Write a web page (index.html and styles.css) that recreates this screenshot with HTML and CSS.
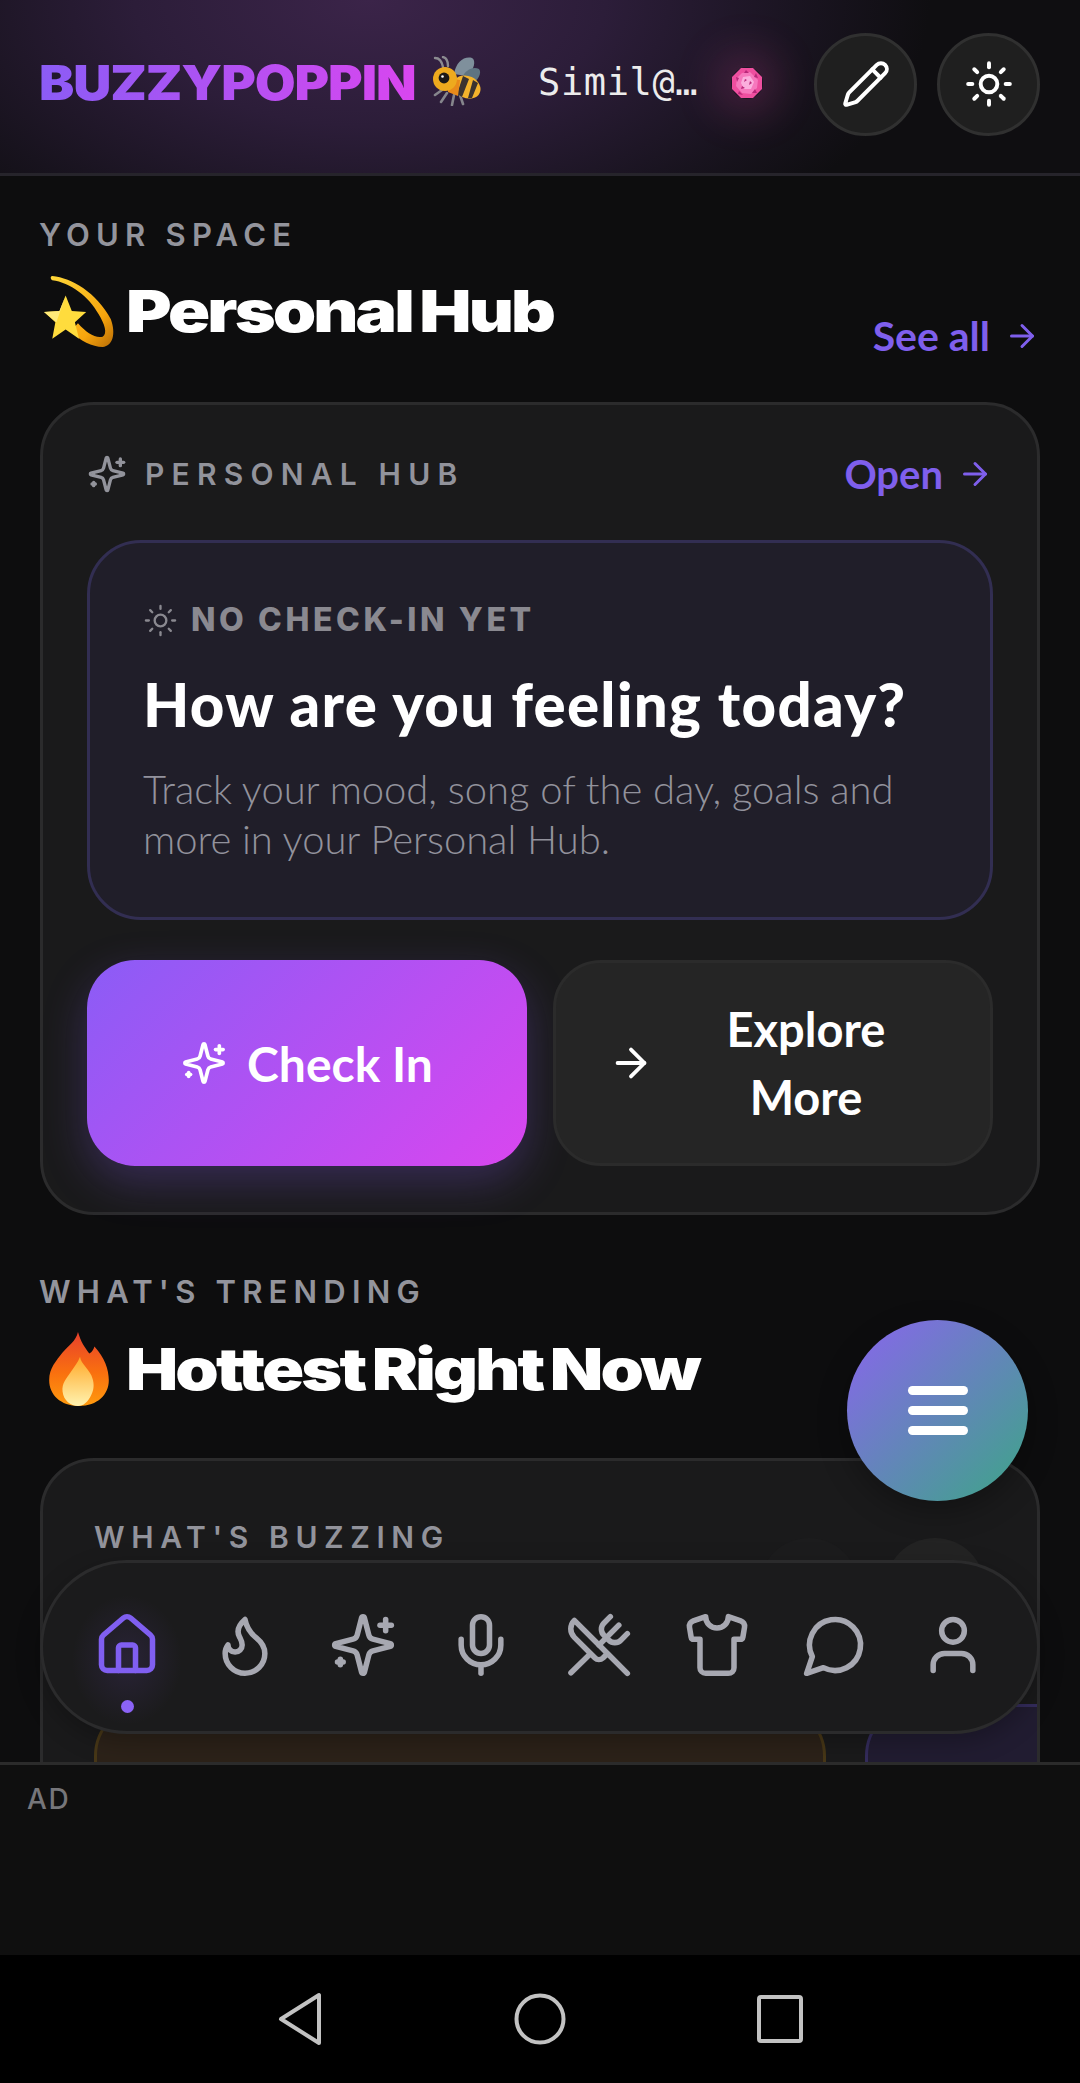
FILE: index.html
```html
<!DOCTYPE html>
<html lang="en">
<head>
<meta charset="utf-8">
<title>BuzzyPoppin</title>
<link rel="stylesheet" href="styles.css">
</head>
<body>
<svg class="defs" width="0" height="0" aria-hidden="true">
  <symbol id="i-home" viewBox="0 0 24 24"><path d="M15 21v-8a1 1 0 0 0-1-1h-4a1 1 0 0 0-1 1v8"/><path d="M3 10a2 2 0 0 1 .709-1.528l7-5.999a2 2 0 0 1 2.582 0l7 5.999A2 2 0 0 1 21 10v9a2 2 0 0 1-2 2H5a2 2 0 0 1-2-2z"/></symbol>
  <symbol id="i-flame" viewBox="0 0 24 24"><path d="M8.5 14.5A2.5 2.5 0 0 0 11 12c0-1.38-.5-2-1-3-1.072-2.143-.224-4.054 2-6 .5 2.5 2 4.9 4 6.5 2 1.6 3 3.5 3 5.5a7 7 0 1 1-14 0c0-1.153.433-2.294 1-3a2.5 2.5 0 0 0 2.5 2.5z"/></symbol>
  <symbol id="i-sparkles" viewBox="0 0 24 24"><path d="M9.937 15.5A2 2 0 0 0 8.5 14.063l-6.135-1.582a.5.5 0 0 1 0-.962L8.5 9.936A2 2 0 0 0 9.937 8.5l1.582-6.135a.5.5 0 0 1 .963 0L14.063 8.5A2 2 0 0 0 15.5 9.937l6.135 1.581a.5.5 0 0 1 0 .964L15.5 14.063a2 2 0 0 0-1.437 1.437l-1.582 6.135a.5.5 0 0 1-.963 0z"/><path d="M20 3v4"/><path d="M22 5h-4"/><path d="M4 17v2"/><path d="M5 18H3"/></symbol>
  <symbol id="i-mic" viewBox="0 0 24 24"><path d="M12 2a3 3 0 0 0-3 3v7a3 3 0 0 0 6 0V5a3 3 0 0 0-3-3Z"/><path d="M19 10v2a7 7 0 0 1-14 0v-2"/><line x1="12" x2="12" y1="19" y2="22"/></symbol>
  <symbol id="i-utensils" viewBox="0 0 24 24"><path d="m16 2-2.3 2.3a3 3 0 0 0 0 4.2l1.8 1.8a3 3 0 0 0 4.2 0L22 8"/><path d="M15 15 3.3 3.3a4.2 4.2 0 0 0 0 6l7.3 7.3c.7.7 2 .7 2.8 0L15 15Zm0 0 7 7"/><path d="m2.1 21.8 6.4-6.3"/><path d="m19 5-7 7"/></symbol>
  <symbol id="i-shirt" viewBox="0 0 24 24"><path d="M20.38 3.46 16 2a4 4 0 0 1-8 0L3.62 3.46a2 2 0 0 0-1.34 2.23l.58 3.47a1 1 0 0 0 .99.84H6v10c0 1.1.9 2 2 2h8a2 2 0 0 0 2-2V10h2.15a1 1 0 0 0 .99-.84l.58-3.47a2 2 0 0 0-1.34-2.23z"/></symbol>
  <symbol id="i-chat" viewBox="0 0 24 24"><path d="M7.9 20A9 9 0 1 0 4 16.1L2 22Z"/></symbol>
  <symbol id="i-user" viewBox="0 0 24 24"><path d="M19 21v-2a4 4 0 0 0-4-4H9a4 4 0 0 0-4 4v2"/><circle cx="12" cy="7" r="4"/></symbol>
  <symbol id="i-pencil" viewBox="0 0 24 24"><path d="M21.174 6.812a1 1 0 0 0-3.986-3.987L3.842 16.174a2 2 0 0 0-.5.83l-1.321 4.352a.5.5 0 0 0 .623.622l4.353-1.32a2 2 0 0 0 .83-.497z"/><path d="m15 5 4 4"/></symbol>
  <symbol id="i-sun" viewBox="0 0 24 24"><circle cx="12" cy="12" r="4"/><path d="M12 2v2"/><path d="M12 20v2"/><path d="m4.93 4.93 1.41 1.41"/><path d="m17.66 17.66 1.41 1.41"/><path d="M2 12h2"/><path d="M20 12h2"/><path d="m6.34 17.66-1.41 1.41"/><path d="m19.07 4.93-1.41 1.41"/></symbol>
  <symbol id="i-arrow" viewBox="0 0 24 24"><path d="M5 12h14"/><path d="m12 5 7 7-7 7"/></symbol>
</svg>

<div class="screen">
  <div class="viewport">
    <header class="topbar">
      <div class="brand">
        <span class="brand-name">BUZZYPOPPIN</span>
        <svg class="bee" viewBox="0 0 50 50" aria-hidden="true">
          <path d="M22 18C24 6 32 0 40 2c4 2 3 12-6 18z" fill="#7f909c"/>
          <path d="M30 22c3-8 11-12 17-9 3 3 0 13-11 16z" fill="#5f7482"/>
          <path d="M3 2c5 0 7 4 8 9M11 1c4 1 5 5 5 9" stroke="#8b8b90" stroke-width="2.4" fill="none" stroke-linecap="round"/>
          <path d="M10 34l-7 5M15 37l-6 9M22 39l-2 10M28 39l3 9" stroke="#85858c" stroke-width="2.6" stroke-linecap="round"/>
          <ellipse cx="35" cy="31" rx="14" ry="11" transform="rotate(25 35 31)" fill="#f3b32c"/>
          <path d="M31 20l-6 18 5 3 7-18zM41 24l-5 18 4 0 6-15z" fill="#3b3330"/>
          <path d="M16 22l12 2-2 16-10-4z" fill="#e98a1a"/>
          <circle cx="13" cy="23" r="12" fill="#eeaa1e"/>
          <circle cx="12" cy="22" r="5.4" fill="#1c1a18"/>
          <circle cx="10.5" cy="20.5" r="1.3" fill="#fff"/>
        </svg>
      </div>
      <div class="user-chip">
        <span class="user-name">Simil@…</span>
        <span class="gem-wrap">
          <svg class="gem" viewBox="0 0 32 32" aria-hidden="true">
            <path d="M10 1h12l9 9v12l-9 9H10l-9-9V10z" fill="#ee4f9f"/>
            <path d="M11 6l8-1 8 8-1 8-6 6-9-1-6-7 1-8z" fill="#f678bd"/>
            <path d="M12 10l7-1 4 6-3 7-7 0-3-6z" fill="#fbaedd"/>
            <path d="M5 10l3 1-2 4zM25 6l2 5-4-1zM24 22l2 4-5 0zM8 24l4 4-5-1zM15 3l3 3-5 0zM19 14l2 2-3 2zM11 19l3 2-4 1zM14 12l2 1-3 2z" fill="#b9287a"/>
          </svg>
        </span>
      </div>
      <button class="round-btn"><svg class="icon icon-btn"><use href="#i-pencil"/></svg></button>
      <button class="round-btn"><svg class="icon icon-btn"><use href="#i-sun"/></svg></button>
    </header>

    <main class="feed">
      <section class="section section-hub">
        <p class="eyebrow">YOUR SPACE</p>
        <div class="section-head">
          <h2 class="section-title">
            <svg class="title-emoji" viewBox="0 0 70 72" aria-hidden="true">
              <defs>
                <linearGradient id="ring" x1="0" y1="0" x2="1" y2="1"><stop offset="0" stop-color="#ffd83a"/><stop offset=".7" stop-color="#f7a50d"/><stop offset="1" stop-color="#b86c06"/></linearGradient>
              </defs>
              <path d="M9 2C28 4 52 18 66 44c5 14 2 26-8 27-10 0-22-6-31-15l7-8c8 9 17 15 24 13 5-3 2-12-4-22C45 22 26 8 9 6 7 5 7 2 9 2z" fill="url(#ring)"/>
              <path d="M22 21l6 15 14 1-11 10 4 16-13-9-13 9 3-16L1 37l15-1z" fill="#ffdc3d"/>
              <path d="M22 21l-6 15-15 1 12 10z" fill="#ffea7a"/>
            </svg>
            <span class="title-text">Personal Hub</span>
          </h2>
          <a class="link link-see">See all <svg class="icon icon-link"><use href="#i-arrow"/></svg></a>
        </div>

        <article class="card hub-card">
          <div class="card-head">
            <span class="card-label"><svg class="icon icon-label"><use href="#i-sparkles"/></svg>PERSONAL HUB</span>
            <a class="link">Open <svg class="icon icon-link"><use href="#i-arrow"/></svg></a>
          </div>
          <div class="checkin">
            <p class="checkin-status"><svg class="icon icon-status"><use href="#i-sun"/></svg>NO CHECK-IN YET</p>
            <h3 class="checkin-title">How are you feeling today?</h3>
            <p class="checkin-desc">Track your mood, song of the day, goals and more in your Personal Hub.</p>
          </div>
          <div class="actions">
            <button class="btn btn-primary"><svg class="icon icon-btn-s"><use href="#i-sparkles"/></svg><span>Check In</span></button>
            <button class="btn btn-dark"><svg class="icon icon-btn-a"><use href="#i-arrow"/></svg><span class="btn-text">Explore More</span></button>
          </div>
        </article>
      </section>

      <section class="section section-hot">
        <p class="eyebrow">WHAT'S TRENDING</p>
        <h2 class="section-title">
          <svg class="title-emoji" viewBox="0 0 66 72" aria-hidden="true">
            <defs>
              <linearGradient id="fl" x1="0" y1="0" x2="0" y2="1"><stop offset="0" stop-color="#e8402c"/><stop offset=".55" stop-color="#f9700f"/><stop offset="1" stop-color="#ff9a0e"/></linearGradient>
              <linearGradient id="fl2" x1="0" y1="0" x2="0" y2="1"><stop offset="0" stop-color="#ffa726"/><stop offset="1" stop-color="#fff3b0"/></linearGradient>
            </defs>
            <path d="M32 0c3 10 6 14 11 21 3-2 4-4 5-7 10 11 14 22 14 33 0 14-11 25-29 25S4 61 4 47c0-12 7-19 13-27 6-7 13-11 15-20z" fill="url(#fl)"/>
            <path d="M34 24c1 7 7 10 11 18 3 7 3 13 0 19-3 7-8 11-13 11-7 0-14-5-15-14-1-8 4-13 8-19 3-5 7-9 9-15z" fill="url(#fl2)"/>
          </svg>
          <span class="title-text">Hottest Right Now</span>
        </h2>

        <article class="card buzz-card">
          <div class="buzz-head">
            <span class="card-label card-label-wide">WHAT'S BUZZING</span>
            <div class="buzz-ctrls"><span class="ctrl ctrl-faint"></span><span class="ctrl"></span></div>
          </div>
          <div class="buzz-row">
            <div class="tile tile-amber"></div>
            <div class="tile tile-violet"></div>
          </div>
        </article>
      </section>
    </main>

    <button class="fab" aria-label="Menu"><span></span><span></span><span></span></button>

    <nav class="dock">
      <a class="dock-item is-active"><svg class="icon icon-dock"><use href="#i-home"/></svg><i class="dock-dot"></i></a>
      <a class="dock-item"><svg class="icon icon-dock"><use href="#i-flame"/></svg></a>
      <a class="dock-item"><svg class="icon icon-dock"><use href="#i-sparkles"/></svg></a>
      <a class="dock-item"><svg class="icon icon-dock"><use href="#i-mic"/></svg></a>
      <a class="dock-item"><svg class="icon icon-dock"><use href="#i-utensils"/></svg></a>
      <a class="dock-item"><svg class="icon icon-dock"><use href="#i-shirt"/></svg></a>
      <a class="dock-item"><svg class="icon icon-dock"><use href="#i-chat"/></svg></a>
      <a class="dock-item"><svg class="icon icon-dock"><use href="#i-user"/></svg></a>
    </nav>
  </div>

  <aside class="ad"><span class="ad-label">AD</span></aside>

  <div class="sysnav">
    <svg class="sys-icon" viewBox="0 0 46 54" aria-hidden="true"><path d="M42 3v48L4 27z"/></svg>
    <svg class="sys-icon" viewBox="0 0 54 54" aria-hidden="true"><circle cx="27" cy="27" r="23.5"/></svg>
    <svg class="sys-icon" viewBox="0 0 46 54" aria-hidden="true"><rect x="2" y="5" width="42" height="44" rx="2"/></svg>
  </div>
</div>
</body>
</html>
```

FILE: styles.css
```css
* { box-sizing: border-box; }
html, body { margin: 0; padding: 0; background: #000; }
body { font-family: "Lato", "Inter", sans-serif; color: #fff; }
p, h2, h3 { margin: 0; }
.defs { position: absolute; }

.screen { width: 1080px; height: 2083px; display: flex; flex-direction: column; overflow: hidden; }
.viewport { position: relative; flex: 1 1 auto; min-height: 0; overflow: hidden; background: #0d0d0e; }

.icon { fill: none; stroke: currentColor; stroke-width: 2; stroke-linecap: round; stroke-linejoin: round; flex: none; }

/* Top bar */
.topbar {
  height: 176px; display: flex; align-items: center; padding: 0 40px 8px;
  border-bottom: 3px solid #26242b;
  background: radial-gradient(ellipse 560px 300px at 370px 0, #3b2449 0%, #2c1d39 42%, #18131e 80%, #0f0e11 100%);
}
.brand { display: flex; align-items: center; }
.brand-name {
  font-family: "Inter", sans-serif; font-weight: 900; font-size: 48px; line-height: 1;
  letter-spacing: -1px; display: inline-block; width: 344px; transform: scaleX(1.1); transform-origin: left center;
  white-space: nowrap; color: transparent; margin-left: -1px;
  background: linear-gradient(90deg, #8b5cf6, #d946ef); -webkit-background-clip: text; background-clip: text;
}
.bee { width: 50px; height: 50px; margin-left: 49px; margin-top: -4px; }
.user-chip { display: flex; align-items: center; margin-left: 56px; flex: 1; }
.user-name { font-family: "DejaVu Sans Mono", monospace; font-size: 37px; color: #ececec; letter-spacing: .6px; line-height: 1; }
.gem-wrap { display: flex; margin-left: 33px; border-radius: 50%; box-shadow: 0 0 44px 14px rgba(226, 74, 160, .24); }
.gem { width: 32px; height: 32px; display: block; }
.round-btn {
  width: 103px; height: 103px; border-radius: 50%; background: #1f1f1f; border: 3px solid #303030;
  display: flex; align-items: center; justify-content: center; color: #fff; padding: 0; margin: 3px 0 0 20px;
}
.icon-btn { width: 50px; height: 50px; stroke-width: 1.9; }

/* Feed */
.feed { padding: 0 40px; }
.section-hub { padding-top: 41px; }
.section-hot { padding-top: 59px; }
.eyebrow {
  font-family: "Inter", sans-serif; font-weight: 600; font-size: 31px; line-height: 36px;
  letter-spacing: 6.2px; color: #93949c; margin-left: -1px;
}
.section-head { display: flex; justify-content: space-between; align-items: flex-end; }
.section-title {
  display: flex; align-items: center; gap: 10px;
  font-family: "Inter", sans-serif; font-weight: 900; font-size: 58px; line-height: 80px;
  letter-spacing: -2.4px; word-spacing: -3px; color: #fff; margin-top: 19px;
}
.section-hub .section-title { margin-top: 18px; }
.title-text { display: inline-block; transform: scaleX(1.2); transform-origin: left center; white-space: nowrap; }
.title-emoji { width: 74px; height: 74px; flex: none; margin-left: 2px; }
.link { display: inline-flex; align-items: center; gap: 14px; font-weight: 700; font-size: 40px; line-height: 48px; color: #7f5fec; }
.link-see { margin-bottom: -9px; font-size: 41px; }
.icon-link { width: 36px; height: 36px; }

/* Cards */
.card { background: #1a1a1b; border: 3px solid #2b2b2c; border-radius: 54px; }
.hub-card { margin-top: 51px; height: 813px; padding: 0 44px; }
.card-head { height: 134px; padding-top: 4px; display: flex; justify-content: space-between; align-items: center; }
.card-label { display: flex; align-items: center; gap: 18px; font-family: "Inter", sans-serif; font-weight: 600; font-size: 30px; letter-spacing: 7.2px; color: #92939b; }
.icon-label { width: 40px; height: 40px; }

.checkin { height: 380px; margin-top: 1px; padding: 56px 53px 0; background: #201e29; border: 3px solid #322e52; border-radius: 54px; }
.checkin-status { display: flex; align-items: center; gap: 13px; font-family: "Inter", sans-serif; font-weight: 800; font-size: 32px; line-height: 40px; letter-spacing: 3.6px; color: #8a8990; margin-top: 1px; }
.icon-status { width: 35px; height: 35px; stroke-width: 1.6; }
.checkin-title { font-weight: 900; font-size: 60px; line-height: 70px; letter-spacing: 1.3px; margin-top: 29px; white-space: nowrap; }
.checkin-desc { font-weight: 300; font-size: 40px; line-height: 50px; margin-top: 25px; color: #92929c; letter-spacing: -.05px; }

.actions { display: grid; grid-template-columns: 1fr 1fr; gap: 26px; margin-top: 40px; }
.btn { height: 206px; border-radius: 48px; border: 0; display: flex; align-items: center; justify-content: center; font-family: "Lato", sans-serif; font-weight: 700; font-size: 48px; color: #fff; padding: 0; }
.btn-primary { gap: 20px; background: linear-gradient(135deg, #8b5cf6 0%, #d946ef 100%); box-shadow: 0 16px 44px rgba(139, 92, 246, .26); }
.icon-btn-s { width: 46px; height: 46px; stroke-width: 1.9; }
.btn-dark { background: #252525; border: 3px solid #2b2b2b; padding: 0 0 0 52px; justify-content: flex-start; font-size: 47px; }
.icon-btn-a { width: 46px; height: 46px; }
.btn-text { width: 200px; line-height: 68px; text-align: center; margin-left: 52px; }

/* Buzz */
.buzz-card { margin-top: 49px; height: 500px; padding: 0 0 0 51px; overflow: hidden; }
.buzz-head { height: 243px; display: flex; justify-content: space-between; padding-top: 58px; padding-right: 52px; }
.card-label-wide { align-self: flex-start; line-height: 36px; letter-spacing: 6.6px; }
.buzz-ctrls { display: flex; gap: 26px; margin-top: 19px; }
.ctrl { width: 100px; height: 100px; border-radius: 50%; background: #232323; }
.ctrl-faint { background: #1c1c1d; }
.buzz-row { display: flex; gap: 39px; }
.tile { flex: none; height: 180px; border-radius: 52px; border: 3px solid; }
.tile-amber { width: 732px; background: #2c2219; border-color: #473717; }
.tile-violet { width: 400px; background: #211c31; border-color: #342c5c; }

/* FAB */
.fab {
  position: absolute; left: 847px; top: 1320px; width: 181px; height: 181px; border: 0; border-radius: 50%;
  background: linear-gradient(135deg, #8a64ee 0%, #3ca686 100%);
  box-shadow: 0 10px 30px rgba(0, 0, 0, .3);
  display: flex; flex-direction: column; align-items: center; justify-content: center; gap: 11px; padding: 0;
}
.fab span { display: block; width: 60px; height: 9px; border-radius: 5px; background: #fff; }

/* Dock */
.dock {
  position: absolute; left: 40px; top: 1560px; width: 1000px; height: 174px; border-radius: 87px;
  background: #1b1b1c; border: 3px solid #2b2b2c; box-shadow: 0 8px 24px rgba(0, 0, 0, .25);
  display: grid; grid-template-columns: repeat(8, 118px); justify-content: center; padding-top: 48px;
}
.dock-item { display: flex; flex-direction: column; align-items: center; color: #a7a8b1; position: relative; }
.icon-dock { width: 68px; height: 68px; stroke-width: 1.95; }
.is-active { color: #7f5ff0; }
.is-active::before { content: ""; position: absolute; left: 4px; top: -16px; width: 110px; height: 130px; border-radius: 50%; background: radial-gradient(closest-side, rgba(139, 92, 246, .12), rgba(139, 92, 246, 0)); }
.dock-dot { width: 13px; height: 13px; border-radius: 50%; background: #8b63f6; margin-top: 21px; }

/* Ad + system nav */
.ad { height: 193px; flex: none; background: #0f0f0f; border-top: 3px solid #2b2b2b; padding: 17px 27px; position: relative; }
.ad-label { font-family: "Inter", sans-serif; font-weight: 500; font-size: 28px; letter-spacing: 1.6px; color: #76767a; line-height: 34px; display: block; }
.sysnav { height: 128px; flex: none; background: #000; display: grid; grid-template-columns: 46px 54px 46px; justify-content: center; column-gap: 190px; align-items: center; }
.sys-icon { fill: none; stroke: #c2c2c2; stroke-width: 4; stroke-linejoin: round; display: block; height: 54px; }
```
